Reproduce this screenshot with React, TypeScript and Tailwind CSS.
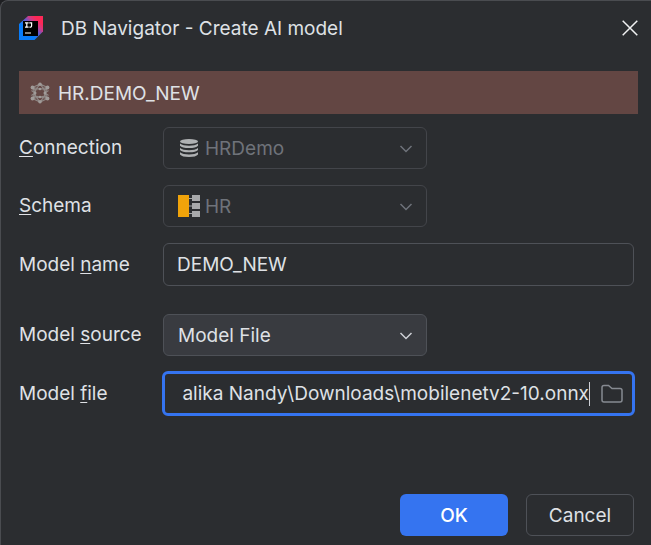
import { useEffect, useRef, useState } from "react";
import type { ReactNode } from "react";

function IdeLogo() {
  return (
    <svg width="24" height="24" viewBox="0 0 24 24" aria-hidden="true">
      <defs>
        <linearGradient id="ij-body" x1="6" y1="18" x2="21" y2="3" gradientUnits="userSpaceOnUse">
          <stop offset="0.2" stopColor="#087cfa" />
          <stop offset="0.5" stopColor="#6b57c8" />
          <stop offset="0.7" stopColor="#d03a85" />
          <stop offset="0.9" stopColor="#fe2857" />
        </linearGradient>
      </defs>
      <path d="M0 8 9 0h15v15.500L15.500 24H0Z" fill="url(#ij-body)" />
      <path d="M4 5h15v15H4Z" fill="#000" />
      <path d="M6 6.800h3.600M7.800 6.800v4.400M6 11.200h3.600M10.300 6.800h2.300v3q0 1.500-2.200 1.400M6 17h6" fill="none" stroke="#fff" strokeWidth="1.200" />
    </svg>
  );
}

function ModelIcon() {
  return (
    <svg width="20" height="22" viewBox="0 0 20 22" fill="none" stroke="#8f8785" aria-hidden="true">
      <path d="M10 2 2.500 5.500 5 11l-2.500 5.500L10 20l7.500-3.500L15 11l2.500-5.500ZM2.500 5.500 10 7l7.500-1.500M2.500 16.500 10 15l7.500 1.500M10 2 5.500 8 5 11l.5 3 4.500 6 4.500-6 .5-3-.5-3ZM5.500 8 10 7l4.500 1M5.500 14l4.500 1 4.500-1M2.500 5.500l3 2.500M17.500 5.500l-3 2.500M2.500 16.500l3-2.500M17.500 16.500l-3-2.500M1.500 8.500 5 11l-3.500 2.500M18.500 8.500 15 11l3.500 2.500" strokeWidth="1.200" />
      <g fill="#a09b99" stroke="none">
        <circle cx="10" cy="2.200" r="1.800" />
        <circle cx="10" cy="19.800" r="1.800" />
        <circle cx="2.500" cy="5.500" r="1.900" />
        <circle cx="17.500" cy="5.500" r="1.900" />
        <circle cx="5" cy="11" r="1.500" />
        <circle cx="15" cy="11" r="1.500" />
        <circle cx="2.500" cy="16.500" r="1.900" />
        <circle cx="17.500" cy="16.500" r="1.900" />
        <circle cx="10" cy="7" r="1.300" />
        <circle cx="10" cy="15" r="1.300" />
      </g>
    </svg>
  );
}

function DatabaseIcon() {
  return (
    <svg width="22" height="22" viewBox="0 0 22 22" aria-hidden="true">
      <g fill="#afb1b3">
        <ellipse cx="11" cy="4.500" rx="9" ry="2.600" />
        <path d="M2 6.500q3 2.200 9 2.200t9-2.200v2.200q-2 2.300-9 2.300t-9-2.300Z" />
        <path d="M2 11q3 2.200 9 2.200t9-2.200v2q-2 2.300-9 2.300t-9-2.300Z" />
        <path d="M2 15.300q3 2.200 9 2.200t9-2.200v2.200q-2 2.500-9 2.500t-9-2.500Z" />
      </g>
    </svg>
  );
}

function SchemaIcon() {
  return (
    <svg width="22" height="22" viewBox="0 0 22 22" aria-hidden="true">
      <path d="M0 0h11v22H0Z" fill="#f0a30a" />
      <path d="M11 3.500h4M11 11h4M11 18.500h4" stroke="#a3a5a7" strokeWidth="1.200" />
      <path d="M14 0h8v6h-8ZM14 8h8v6h-8ZM14 16h8v6h-8Z" fill="#a8a9ab" />
    </svg>
  );
}

function Chevron() {
  return (
    <svg width="14" height="8" viewBox="0 0 14 8" fill="none" stroke="currentColor" strokeWidth="1.500" aria-hidden="true">
      <path d="m1.500 1 5.500 5.500L12.500 1" />
    </svg>
  );
}

function FolderIcon() {
  return (
    <svg width="22" height="20" viewBox="0 0 22 20" fill="none" stroke="#868a91" strokeWidth="1.500" aria-hidden="true">
      <path d="M1 16V3.500Q1 1.500 3 1.500h4.500l3.500 3h8q2 0 2 2V16q0 2-2 2H3q-2 0-2-2Z" />
    </svg>
  );
}

function Mnemonic({ children }: { children: string }) {
  return <span className="underline decoration-1 underline-offset-2">{children}</span>;
}

function Row({ id, label, children }: { id: string; label: ReactNode; children: ReactNode }) {
  return (
    <div className="flex items-center">
      <label htmlFor={id} className="w-36 shrink-0 whitespace-pre">
        {label}
      </label>
      {children}
    </div>
  );
}

function Combo({ id, value, icon, disabled = false }: { id: string; value: string; icon?: ReactNode; disabled?: boolean }) {
  return (
    <div className={`relative w-66 ${disabled ? "text-[#6f737a]" : "text-[#dfe1e5]"}`}>
      {icon && <span className="pointer-events-none absolute inset-y-0 left-[15px] flex items-center">{icon}</span>}
      <select
        id={id}
        disabled={disabled}
        className={`block h-[42px] w-full appearance-none rounded-md border pt-0.5 pr-10 opacity-100 outline-none ${
          disabled ? "border-[#43454a] bg-transparent" : "border-[#4e5157] bg-[#393b40]"
        } ${icon ? "pl-[41px]" : "pl-3.5"}`}
      >
        <option>{value}</option>
      </select>
      <span className={`pointer-events-none absolute inset-y-0 right-3.5 flex items-center pt-0.5 ${disabled ? "text-[#6f737a]" : "text-[#ced0d6]"}`}>
        <Chevron />
      </span>
    </div>
  );
}

export default function App() {
  const [name, setName] = useState("DEMO_NEW");
  const [file, setFile] = useState("alika Nandy\\Downloads\\mobilenetv2-10.onnx");
  const fileRef = useRef<HTMLInputElement>(null);

  useEffect(() => {
    const el = fileRef.current;
    if (el) el.scrollLeft = el.scrollWidth;
  }, []);

  return (
    <div className="bg-[#1e1f22]">
      <main className="flex min-h-screen flex-col rounded-tl-lg border-t border-l border-[#4a4c50] bg-[#2b2d30] pr-[13px] pb-[9px] pl-[18px] font-['Inter',sans-serif] text-[19px] leading-6 text-[#dfe1e5]">
        <header className="flex h-[54px] items-center">
          <IdeLogo />
          <h1 className="ml-[18px] flex-1 pt-0.5">DB Navigator - Create AI model</h1>
          <button type="button" aria-label="Close" className="flex size-4 items-center justify-center">
            <svg width="16" height="16" viewBox="0 0 16 16" stroke="#f0f1f2" strokeWidth="1.500" aria-hidden="true">
              <path d="m.7.7 14.600 14.600M15.300.7.7 15.300" />
            </svg>
          </button>
        </header>

        <div className="mt-4 flex h-[43px] items-center gap-2 bg-[#634643] pl-[11px]">
          <ModelIcon />
          <span className="pt-0.5">HR.DEMO_NEW</span>
        </div>

        <form className="mt-[13px] flex-1">
          <div className="flex flex-col gap-4">
            <Row id="connection" label={<><Mnemonic>C</Mnemonic>onnection</>}>
              <Combo id="connection" value="HRDemo" icon={<DatabaseIcon />} disabled />
            </Row>
            <Row id="schema" label={<><Mnemonic>S</Mnemonic>chema</>}>
              <Combo id="schema" value="HR" icon={<SchemaIcon />} disabled />
            </Row>
            <Row id="name" label={<>Model <Mnemonic>n</Mnemonic>ame</>}>
              <input
                id="name"
                value={name}
                onChange={(e) => setName(e.target.value)}
                className="mr-1 h-[43px] min-w-0 flex-1 rounded-md border border-[#4e5157] bg-transparent px-[13px] outline-none"
              />
            </Row>
          </div>
          <div className="mt-7 flex flex-col gap-[15px]">
            <Row id="source" label={<>Model <Mnemonic>s</Mnemonic>ource</>}>
              <Combo id="source" value="Model File" />
            </Row>
            <Row id="file" label={<>Model <Mnemonic>f</Mnemonic>ile</>}>
              <div className="-ml-px mr-[3px] flex h-[45px] min-w-0 flex-1 items-center rounded-md border-3 border-[#3574f0] pr-[9px] pl-[11px]">
                <input
                  id="file"
                  ref={fileRef}
                  value={file}
                  onChange={(e) => setFile(e.target.value)}
                  className="min-w-0 flex-1 bg-transparent text-right outline-none"
                />
                <span className="h-6 w-px bg-[#ced0d6]" />
                <button type="button" aria-label="Browse" className="ml-[11px]">
                  <FolderIcon />
                </button>
              </div>
            </Row>
          </div>
        </form>

        <footer className="mr-1 flex justify-end gap-[18px]">
          <button type="button" className="h-[42px] w-27 rounded-md bg-[#3574f0] pt-0.5 font-medium text-white">
            OK
          </button>
          <button type="button" className="h-[42px] w-27 rounded-md border border-[#4e5157] pt-0.5">
            Cancel
          </button>
        </footer>
      </main>
    </div>
  );
}
